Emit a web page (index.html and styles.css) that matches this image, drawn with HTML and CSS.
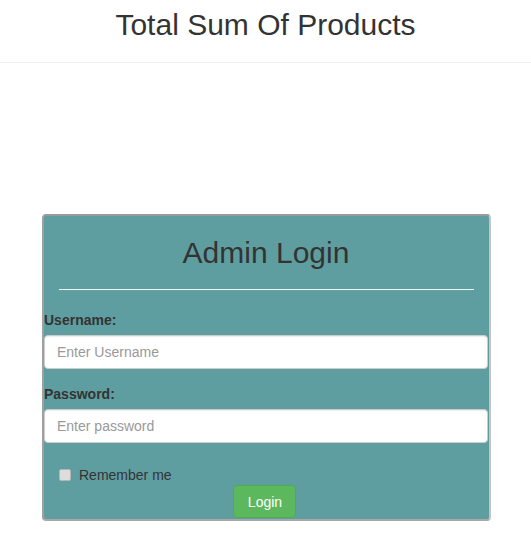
FILE: index.html
```html
<!DOCTYPE html>
<html>
<head>
<meta charset="utf-8">
<link rel="stylesheet" href="styles.css">
</head>
<body>
<header class="site-header">
  <h1 class="site-title">Total Sum Of Products</h1>
</header>
<main class="page">
  <form class="login-card">
    <h2 class="login-title">Admin Login</h2>
    <hr class="login-rule">
    <label class="field-label" for="u">Username:</label>
    <input class="field-input" id="u" type="text" placeholder="Enter Username">
    <label class="field-label field-label-2" for="p">Password:</label>
    <input class="field-input" id="p" type="password" placeholder="Enter password">
    <label class="remember"><input type="checkbox" class="remember-box"><span>Remember me</span></label>
    <div class="actions"><button type="button" class="btn-login">Login</button></div>
  </form>
</main>
</body>
</html>
```
FILE: styles.css
```css
* { box-sizing: border-box; }
html, body { margin: 0; padding: 0; background: #fff; }
body {
  font-family: "Liberation Sans", Arial, sans-serif;
  font-size: 14px;
  line-height: 20px;
  color: #333;
}
.site-header {
  padding: 8px 0 21px;
  border-bottom: 1px solid #eee;
  text-align: center;
}
.site-title {
  margin: 0;
  font-size: 30px;
  line-height: 33px;
  font-weight: 400;
  color: #333;
}
.page {
  padding-top: 151px;
  padding-bottom: 20px;
}
.login-card {
  margin: 0 0 0 42px;
  width: 449px;
  background: #5f9ea0;
  border-top: 2px solid #9a9a9a;
  border-left: 2px solid #a0a0a0;
  border-right: 2px solid #c4c4c4;
  border-bottom: 2px solid #a8a8a8;
  border-radius: 4px;
  padding: 0 1px 0 0;
  display: flex;
  flex-direction: column;
}
.login-title {
  margin: 20px 0 0;
  font-size: 30px;
  line-height: 33px;
  font-weight: 400;
  text-align: center;
  color: #333;
}
.login-rule {
  margin: 20px 14px 0 15px;
  border: 0;
  border-top: 1px solid #eef6f6;
  height: 0;
}
.field-label {
  display: block;
  margin: 20px 0 5px;
  font-weight: 700;
  color: #333;
}
.field-label-2 { margin-top: 15px; }
.field-input {
  display: block;
  width: 444px;
  height: 34px;
  padding: 6px 12px;
  font-family: inherit;
  font-size: 14px;
  color: #555;
  background: #fff;
  border: 1px solid #ccc;
  border-radius: 4px;
  box-shadow: inset 0 1px 1px rgba(0,0,0,.075);
}
.field-input::placeholder { color: #999; }
.remember {
  display: flex;
  align-items: center;
  margin: 22px 0 0 15px;
  height: 20px;
  color: #333;
}
.remember-box {
  margin: 0 8px 0 0;
  width: 12px;
  height: 12px;
  appearance: none;
  -webkit-appearance: none;
  background: #ddd;
  border: 1px solid #b5b5b5;
  border-radius: 2px;
}
.actions {
  display: flex;
  justify-content: center;
  padding: 0 3px 1px 0;
}
.btn-login {
  height: 33px;
  padding: 6px 13px 6px 14px;
  font-family: inherit;
  font-size: 14px;
  color: #fff;
  background: #5cb85c;
  border: 1px solid #4cae4c;
  border-radius: 4px;
}
```
